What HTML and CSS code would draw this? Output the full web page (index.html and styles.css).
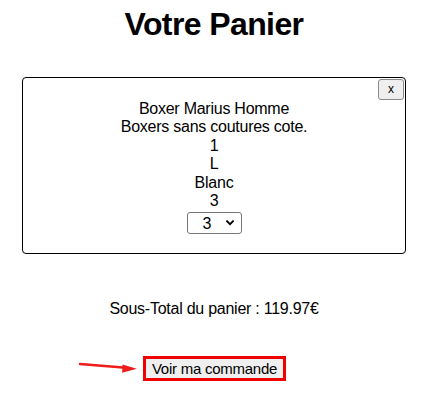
FILE: index.html
```html
<!DOCTYPE html>
<html lang="fr">
<head>
<meta charset="utf-8">
<title>Votre Panier</title>
<link rel="stylesheet" href="styles.css">
</head>
<body>
<h1 class="title">Votre Panier</h1>
<div class="cart-item">
  <div class="item-top">
    <button class="remove" type="button">x</button>
  </div>
  <div class="item-lines">
    <div>Boxer Marius Homme</div>
    <div>Boxers sans coutures cote.</div>
    <div>1</div>
    <div>L</div>
    <div>Blanc</div>
    <div>3</div>
  </div>
  <div class="qty-row">
    <span class="select-wrap">
      <select class="qty">
        <option>1</option>
        <option>2</option>
        <option selected>3</option>
      </select>
      <svg class="chev" width="8" height="6" viewBox="0 0 8 6"><path d="M1 1.2 L4 4.2 L7 1.2" fill="none" stroke="#000" stroke-width="1.8" stroke-linecap="square"/></svg>
    </span>
  </div>
</div>
<p class="subtotal">Sous-Total du panier : 119.97€</p>
<div class="action">
  <svg class="pointer" width="64" height="24" viewBox="0 0 64 24"><line x1="4" y1="12" x2="50" y2="15.8" stroke="#ee1c1c" stroke-width="2.4" stroke-linecap="round"/><polygon points="60.8,16.8 46.5,12.6 46.2,20.8" fill="#ee1c1c"/></svg>
  <button class="order" type="button">Voir ma commande</button>
</div>
</body>
</html>
```

FILE: styles.css
```css
html, body {
  margin: 0;
  padding: 0;
  background: #ffffff;
}
body {
  font-family: "Liberation Sans", Arial, sans-serif;
  font-size: 16px;
  color: #000;
  text-align: center;
  letter-spacing: -0.25px;
}
.title {
  font-size: 32px;
  font-weight: bold;
  line-height: 36.8px;
  margin: 6px 0 34.2px;
  letter-spacing: -0.6px;
}
.cart-item {
  margin: 0 22px;
  border: 1px solid #000;
  border-radius: 4px;
  padding: 1px 1px 18.6px;
}
.item-top {
  display: flex;
  justify-content: flex-end;
}
.remove {
  width: 26px;
  height: 21px;
  padding: 0;
  margin: 0;
  background: #efefef;
  border: 1px solid #8a8a8a;
  border-radius: 3px;
  font-family: "Liberation Sans", Arial, sans-serif;
  font-size: 12px;
  line-height: 17px;
  color: #000;
  letter-spacing: 0;
}
.item-lines {
  line-height: 18.4px;
}
.qty-row {
  display: flex;
  justify-content: center;
  margin-top: 2px;
}
.select-wrap {
  position: relative;
  display: inline-block;
  height: 22px;
}
.qty {
  appearance: none;
  -webkit-appearance: none;
  width: 55px;
  height: 22px;
  margin: 0;
  padding: 0 0 0 15px;
  border: 1px solid #767676;
  border-radius: 3px;
  background: #fff;
  font-family: "Liberation Sans", Arial, sans-serif;
  font-size: 16px;
  color: #000;
  text-align: left;
}
.chev {
  position: absolute;
  right: 8px;
  top: 8px;
  pointer-events: none;
}
.subtotal {
  margin: 46px 0 0;
  line-height: 18.4px;
}
.action {
  position: relative;
  display: flex;
  justify-content: center;
  margin-top: 37.6px;
}
.pointer {
  position: absolute;
  left: 76px;
  top: -4px;
}
.order {
  margin: 0 0 0 1px;
  padding: 1px 5.5px;
  border: 3px solid #f00000;
  border-radius: 0;
  background: #efefef;
  font-family: "Liberation Sans", Arial, sans-serif;
  font-size: 15px;
  line-height: 17px;
  letter-spacing: -0.25px;
  color: #000;
}
```
